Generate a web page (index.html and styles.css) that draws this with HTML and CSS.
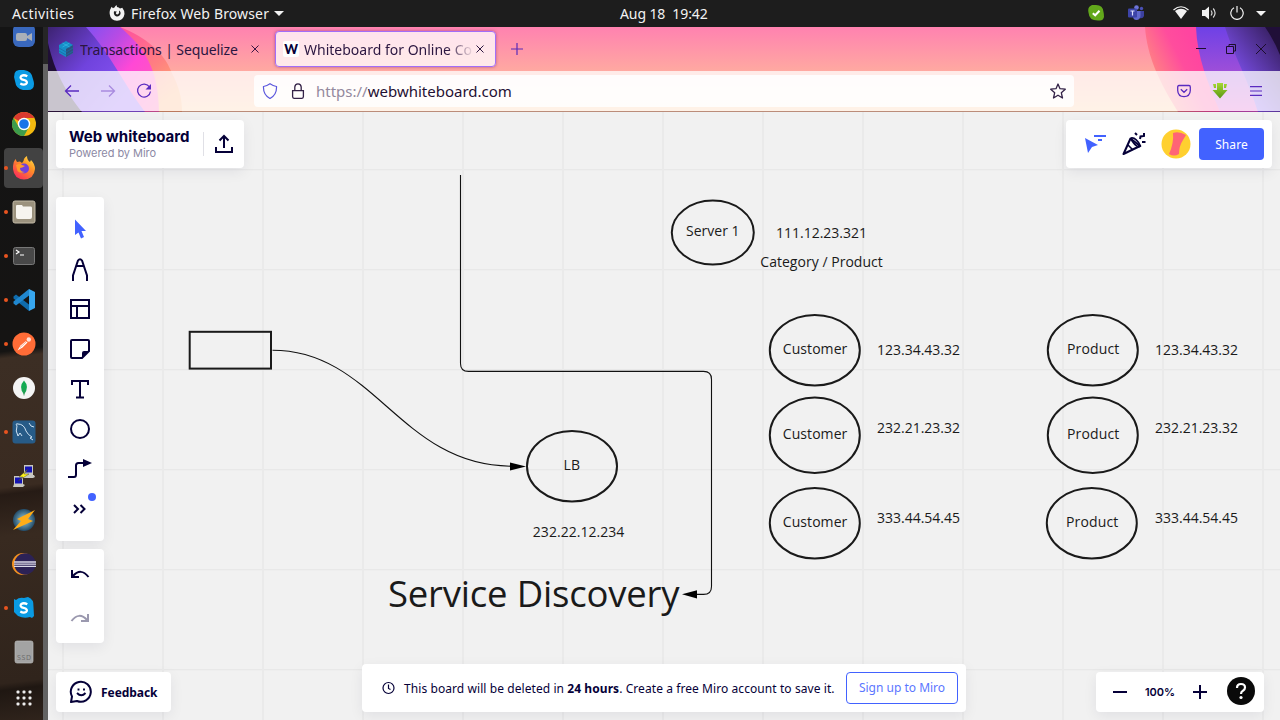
FILE: index.html
```html
<!DOCTYPE html>
<html lang="en">
<head>
<meta charset="utf-8">
<title>Web whiteboard</title>
<link rel="stylesheet" href="styles.css">
</head>
<body>
<header class="topbar">
  <span class="activities">Activities</span>
  <svg class="app-icon" width="16" height="16" viewBox="0 0 16 16"><path d="M1 5L2.600 1.800L4 3.200Q4.800 2.600 5.500 2.500Q6 1 7.500 0L8 2Q10 2.200 11 3.500L13.300 2.800Q15.800 6 15.500 9Q14.500 15.500 8 15.800Q1.500 15.500.7 9Q.4 7 1 5Z" fill="#f2f2f2"/><path d="M5 6.200L7.800 6.500L6.800 8Q7 9.800 9 9.300Q10.800 8.500 10 5.500Q12.300 7 11.300 9.500Q9.800 12 7 11.200Q4.200 9.800 5 6.200Z" fill="#1d1d1d"/></svg>
  <span class="app-name">Firefox Web Browser</span>
  <i class="caret"></i>
  <span class="clock">Aug 18&nbsp; 19:42</span>
  <div class="tray">
    <svg width="16" height="16" viewBox="0 0 16 16"><path d="M4 0H8Q15 0 15.500 7Q16 9 16 12Q15 16 11 15.500Q1 16 .6 8Q-1 2 4 0Z" fill="#62a81b"/><path d="M4.800 8.200L7.200 10.300L11.500 5.800" fill="none" stroke="#fff" stroke-width="2"/></svg>
    <svg class="teams" width="16" height="16" viewBox="0 0 16 16"><circle cx="8.500" cy="2.500" r="2.300" fill="#6d74d8"/><circle cx="13.500" cy="3.500" r="1.700" fill="#4a50b5"/><path d="M10 6H16V11Q15 14 11.500 13Z" fill="#3c41a0"/><path d="M5 6H12.500V11Q12 15 8.500 15Q5 15 5 11Z" fill="#6168cc"/><rect y="3.500" width="9" height="9" rx="1" fill="#3d44a8"/><path d="M2.500 6H6.500M4.500 6V10.500" stroke="#dfe1ff" stroke-width="1.200"/></svg>
    <svg class="wifi" width="16" height="14" viewBox="0 0 16 14"><path d="M.5 4Q8-2.500 15.500 4" fill="none" stroke="#f2f2f2" stroke-width="1.200"/><path d="M2 5Q8 .7 14 5L8 13Z" fill="#f2f2f2"/></svg>
    <svg class="sound" width="16" height="14" viewBox="0 0 16 14"><path d="M1 4H4L8 .5V13.500L4 10H1Z" fill="#f2f2f2"/><path d="M10 4.500Q12 7 10 9.500M12.200 2.500Q16 7 12.200 11.500" fill="none" stroke="#d8d8d8" stroke-width="1.200"/></svg>
    <svg class="power" width="14" height="14" viewBox="0 0 14 14"><path d="M4 1.800A6.200 6.200 0 1 0 10 1.800M7 0V6.500" fill="none" stroke="#f2f2f2" stroke-width="1.200"/></svg>
    <i class="caret"></i>
  </div>
</header>

<div class="desktop">
  <nav class="dock">
    <div class="dock-items">
      <div class="app"><svg width="24" height="24" viewBox="0 0 24 24"><rect x="1" width="22" height="23" rx="6" fill="#3968bd"/><rect x="4" y="9" width="11" height="8" rx="2" fill="#aab0b8"/><path d="M15 12L20 9V17L15 14Z" fill="#aab0b8"/></svg></div>
      <div class="app"><svg width="24" height="24" viewBox="0 0 24 24"><path d="M7 2Q10 2 12 2Q20 3 21 11Q22 14 22 16Q22 22 16 22Q13 22 11 22Q4 21 3 13Q0 3 7 2Z" fill="#0a9be4"/><path d="M15.300 8.300Q12 6.400 9.300 7.900Q7.500 10 10 11.400L13.500 12.500Q16 14 14 16Q11.500 17.400 8.300 15.500" fill="none" stroke="#fff" stroke-width="2.300"/></svg></div>
      <div class="app"><svg width="24" height="24" viewBox="0 0 24 24"><circle cx="12" cy="12" r="12" fill="#f2b90f"/><path d="M12 12L1.600 6A12 12 0 0 1 22.400 6H12Z" fill="#d93a2f"/><path d="M1.600 6A12 12 0 0 0 12 24L17 15L12 12L6.800 15Z" fill="#3c9c4c"/><circle cx="12" cy="12" r="6.200" fill="#fff"/><circle cx="12" cy="12" r="4.800" fill="#1a73e8"/></svg></div>
      <div class="app running selected"><svg width="24" height="24" viewBox="0 0 24 24"><defs><linearGradient id="fox" x1="1" y1="0" x2=".3" y2="1"><stop offset="0" stop-color="#fff04d"/><stop offset=".45" stop-color="#ff9326"/><stop offset="1" stop-color="#fa3059"/></linearGradient></defs><path d="M1 10Q1 6 3.500 3L5 6L8 5.500L10 7Q12 5 12 3Q13 1 15 0Q15 4 18 6L19 4Q23 8 23 13Q22 23 12 23.500Q2 23 1 13Z" fill="url(#fox)"/><circle cx="12" cy="12.500" r="5" fill="#7340dc"/><path d="M4 9Q8 7 10 9L13 10Q10 12 8 12Q8 16 13 16Q8 18 5.500 15Z" fill="#ff9a2a"/></svg></div>
      <div class="app running"><svg width="24" height="24" viewBox="0 0 24 24"><rect x="1" y="1" width="22" height="22" rx="2" fill="#9b927e" stroke="#c1b9a6"/><path d="M4 6Q4 5 5 5H10L11 6.500H19Q20 6.500 20 8V17Q20 19 18 19H6Q4 19 4 17Z" fill="#f6f4ef"/></svg></div>
      <div class="app running"><svg width="24" height="24" viewBox="0 0 24 24"><rect x="1.500" y="3.500" width="21" height="17" rx="2" fill="#484848" stroke="#777"/><path d="M4 6L7 8L4 10M8 11H12" fill="none" stroke="#fff" stroke-width="1.200"/></svg></div>
      <div class="app running"><svg width="24" height="24" viewBox="0 0 24 24"><path d="M1.500 8.500L4 6.500L17 16.500V23L1.500 10.500Z" fill="#0f6cad"/><path d="M1.500 15.500L4 17.500L17 7.500V1L1.500 13.500Z" fill="#2087cf"/><path d="M17 1L23 4V20L17 23Z" fill="#37a6ef"/></svg></div>
      <div class="app running"><svg width="24" height="24" viewBox="0 0 24 24"><circle cx="12" cy="12" r="11.500" fill="#ff6c37"/><path d="M5.500 18.500L8.500 13.500L14 9L15.500 10.500L10.500 15.500Z" fill="#fff"/><circle cx="16.800" cy="7.500" r="2.200" fill="#ffe3d9"/><path d="M8 15.500L15 9" stroke="#ff6c37" stroke-width=".6"/></svg></div>
      <div class="app"><svg width="24" height="24" viewBox="0 0 24 24"><circle cx="12" cy="12" r="11" fill="#f4f4f4"/><path d="M12 4.500Q18 11 12 18.500Q6 11 12 4.500Z" fill="#13aa52"/><path d="M12 12V19.500" stroke="#3c8e54" stroke-width=".8"/></svg></div>
      <div class="app running"><svg width="24" height="24" viewBox="0 0 24 24"><rect x=".5" y=".5" width="23" height="23" rx="3" fill="#275b87"/><path d="M6 16Q3 11 5 6Q3 3 6 4Q12 4 14 11Q16 15 20 17L18 18L21 20M6 16L8 13L10 16M17 3L19 6L22 7" fill="none" stroke="#cfe2f2" stroke-width="1"/></svg></div>
      <div class="app"><svg width="24" height="24" viewBox="0 0 24 24"><path d="M12 1H21V11H22L23 13L21 14H12L10 12L12 10Z" fill="#c7c7c0"/><rect x="13" y="2.500" width="7" height="6" fill="#1414b4"/><path d="M2 12H11V20L13 21L11 23H1L2 20Z" fill="#c7c7c0"/><rect x="3" y="13.500" width="7" height="6" fill="#1414b4"/><path d="M16 5L7 13H11L6 17L17 10H12Z" fill="#fff31a" stroke="#333" stroke-width=".4"/></svg></div>
      <div class="app"><svg width="24" height="24" viewBox="0 0 24 24"><defs><radialGradient id="globe"><stop offset="0" stop-color="#9cd0df"/><stop offset="1" stop-color="#224b68"/></radialGradient></defs><circle cx="12" cy="12" r="11" fill="url(#globe)"/><path d="M23 2L5 11L9 13L1 22L21 13L16 11Z" fill="#ffad18"/></svg></div>
      <div class="app"><svg width="24" height="24" viewBox="0 0 24 24"><circle cx="11" cy="12" r="11" fill="#f39221"/><circle cx="13" cy="12" r="10.700" fill="#2c2255"/><path d="M2 10H24M2 12.200H24M2 14.400H24" stroke="#d9d8e6" stroke-width="1.300"/></svg></div>
      <div class="app running"><svg width="24" height="24" viewBox="0 0 24 24"><path d="M2 3L4 4Q7 1 12 2L16 1Q22 3 21.500 11L22 20L20 22L18 21Q12 23 6 20L2 16Z" fill="#0a9be4"/><path d="M15.300 8.300Q12 6.400 9.300 7.900Q7.500 10 10 11.400L13.500 12.500Q16 14 14 16Q11.500 17.400 8.300 15.500" fill="none" stroke="#fff" stroke-width="2.300"/></svg></div>
      <div class="app"><svg width="24" height="24" viewBox="0 0 24 24"><rect x="3" y="1" width="18" height="22" rx="2" fill="#a3a3a3" stroke="#bababa" stroke-width=".7"/><text x="5" y="20" font-family="Open Sans, sans-serif" font-size="7" textLength="14" fill="#6a6a6a">SSD</text></svg></div>
      <div class="app"><svg width="24" height="24" viewBox="0 0 24 24" fill="#eee"><rect x="4.500" y="6.500" width="3" height="3" rx="1"/><rect x="10.500" y="6.500" width="3" height="3" rx="1"/><rect x="16.500" y="6.500" width="3" height="3" rx="1"/><rect x="4.500" y="12.500" width="3" height="3" rx="1"/><rect x="10.500" y="12.500" width="3" height="3" rx="1"/><rect x="16.500" y="12.500" width="3" height="3" rx="1"/><rect x="4.500" y="18.500" width="3" height="3" rx="1"/><rect x="10.500" y="18.500" width="3" height="3" rx="1"/><rect x="16.500" y="18.500" width="3" height="3" rx="1"/></svg></div>
    </div>
    <div class="dock-edge"></div>
  </nav>

  <div class="browser">
    <div class="chrome">
      <svg class="theme" width="1232" height="85" viewBox="0 0 1232 85">
        <defs>
          <linearGradient id="base" x1="0" y1="0" x2="0" y2="1"><stop offset="0" stop-color="#ff82b0"/><stop offset=".52" stop-color="#ffa9a1"/><stop offset="1" stop-color="#ffcb9b"/></linearGradient>
          <linearGradient id="purpleL" gradientUnits="userSpaceOnUse" x1="0" y1="0" x2="80" y2="70"><stop offset="0" stop-color="#3d2372"/><stop offset=".5" stop-color="#7043dd"/><stop offset="1" stop-color="#8b56f6"/></linearGradient>
          <linearGradient id="magenta" gradientUnits="userSpaceOnUse" x1="38" y1="0" x2="120" y2="70"><stop offset="0" stop-color="#8150f2"/><stop offset=".28" stop-color="#b84be4"/><stop offset=".55" stop-color="#ff48d6"/><stop offset="1" stop-color="#ff62b0"/></linearGradient>
          <linearGradient id="warmL" gradientUnits="userSpaceOnUse" x1="72" y1="0" x2="125" y2="70"><stop offset="0" stop-color="#ff4d9f"/><stop offset=".6" stop-color="#ff8180"/><stop offset="1" stop-color="#ffad70"/></linearGradient>
          <linearGradient id="warmR" gradientUnits="userSpaceOnUse" x1="1102" y1="50" x2="1150" y2="25"><stop offset="0" stop-color="#ff8c7e"/><stop offset=".65" stop-color="#ff4d9d"/><stop offset="1" stop-color="#ff45a0"/></linearGradient>
          <linearGradient id="purpleR" x1="0" y1="0" x2="0" y2="1"><stop offset="0" stop-color="#6e41e6"/><stop offset=".55" stop-color="#a04fd8"/><stop offset="1" stop-color="#dd50c9"/></linearGradient>
          <linearGradient id="violetR" x1="1" y1="0" x2=".3" y2=".8"><stop offset=".15" stop-color="#3b2269"/><stop offset="1" stop-color="#8455fa"/></linearGradient>
        </defs>
        <rect width="1232" height="85" fill="url(#base)"/>
        <path d="M72 0C98 10 116 26 123 44C131 60 134 70 134 85H0V0Z" fill="url(#warmL)"/>
        <path d="M72 0C98 22 110 42 111 85H0V0Z" fill="url(#magenta)"/>
        <path d="M38 0C62 26 75 56 97 85H0V0Z" fill="url(#purpleL)"/>
        <path d="M0 16C7 46 18 65 34 85H0Z" fill="#1f0f35"/>
        <path d="M1097 0C1099 30 1112 56 1130 85H1232V0Z" fill="url(#warmR)"/>
        <path d="M1148 0C1149 30 1160 56 1172 85H1232V0Z" fill="url(#purpleR)"/>
        <path d="M1177 0C1184 24 1199 50 1210 85H1232V0Z" fill="url(#violetR)"/>
        <path d="M1217 0Q1226 13 1232 28V0Z" fill="#200f38"/>
      </svg>
      <div class="tabs">
        <div class="tab">
          <svg width="16" height="16" viewBox="0 0 16 16"><path d="M8 0L15 4V12L8 16L1 12V4Z" fill="#168fc8"/><path d="M8 8L15 4V12L8 16Z" fill="#2b537f"/><path d="M1 7L8 11L15 7M1 10L8 14L15 10" fill="none" stroke="#1c6aa5" stroke-width=".8"/><path d="M4.500 2L11.500 6M11.500 2L4.500 6" stroke="#3cbde8" stroke-width=".6"/></svg>
          <span class="tab-title first">Transactions | Sequelize</span>
          <svg class="close" width="8" height="8" viewBox="0 0 8 8"><path d="M.5.5L7.500 7.500M7.500.5L.5 7.500" stroke="#3a1644"/></svg>
        </div>
        <div class="tab active">
          <span class="w-icon">W</span>
          <span class="tab-title second">Whiteboard for Online Co</span>
          <svg class="close" width="8" height="8" viewBox="0 0 8 8"><path d="M.5.5L7.500 7.500M7.500.5L.5 7.500" stroke="#2b1640"/></svg>
        </div>
        <svg class="new-tab" width="12" height="12" viewBox="0 0 12 12"><path d="M6 0V12M0 6H12" stroke="#5a2bb8" stroke-width="1.200"/></svg>
        <div class="window-buttons">
          <svg width="10" height="10" viewBox="0 0 10 10"><path d="M0 4.500H10" stroke="#1c0e2d"/></svg>
          <svg width="10" height="10" viewBox="0 0 10 10"><path d="M.5 2.500H7.500V9.500H.5ZM3 2.500V.5H9.500V7H7.500" fill="none" stroke="#1c0e2d"/></svg>
          <svg width="10" height="10" viewBox="0 0 10 10"><path d="M0 0L10 10M10 0L0 10" stroke="#1c0e2d"/></svg>
        </div>
      </div>
      <div class="toolbar">
        <svg width="16" height="16" viewBox="0 0 16 16"><path d="M15 8H1.500M7 2.500L1.500 8L7 13.500" fill="none" stroke="#5a2bc0" stroke-width="1.300"/></svg>
        <svg class="forward" width="16" height="16" viewBox="0 0 16 16"><path d="M1 8H14.500M9 2.500L14.500 8L9 13.500" fill="none" stroke="#a98bdf" stroke-width="1.300"/></svg>
        <svg class="reload" width="16" height="16" viewBox="0 0 16 16"><path d="M13.500 4A6.500 6.500 0 1 0 14.500 8.500" fill="none" stroke="#5a2bc0" stroke-width="1.300"/><path d="M15 1V6.500H9.500Z" fill="#5a2bc0"/></svg>
        <div class="address">
          <svg width="16" height="16" viewBox="0 0 16 16"><path d="M8 .8Q11 3 14.500 3.500Q15 12 8 15.500Q1 12 1.500 3.500Q5 3 8 .8Z" fill="none" stroke="#5b57dd" stroke-width="1.200"/></svg>
          <svg class="lock" width="14" height="16" viewBox="0 0 14 16"><path d="M1.600 7.600H12.400V13.500Q12.400 15.300 11 15.300H3Q1.600 15.300 1.600 13.500ZM3.800 7V4Q4 .8 7 .8Q10 .8 10.200 4V7" fill="none" stroke="#342247" stroke-width="1.300"/></svg>
          <span class="url"><span class="scheme">https://</span>webwhiteboard.com</span>
          <svg class="star" width="16" height="16" viewBox="0 0 16 16"><path d="M8 1L10 5.700L15.300 6.200L11.300 9.700L12.500 15L8 12.200L3.500 15L4.700 9.700L.7 6.200L6 5.700Z" fill="none" stroke="#342247" stroke-width="1.300" stroke-linejoin="round"/></svg>
        </div>
        <svg class="pocket" width="14" height="14" viewBox="0 0 14 14"><path d="M2 1.500H12Q13.300 1.500 13.300 3V6.500Q13 12.500 7 12.700Q1 12.500.7 6.500V3Q.7 1.500 2 1.500ZM3.800 5.300L7 8.300L10.200 5.300" fill="none" stroke="#5a2bc0" stroke-width="1.300"/></svg>
        <svg class="download" width="16" height="16" viewBox="0 0 16 16"><defs><linearGradient id="leaf" x1="0" y1="0" x2="0" y2="1"><stop offset="0" stop-color="#a5d832"/><stop offset="1" stop-color="#5a9714"/></linearGradient></defs><path d="M5 0H11V7H15.500L8 15.500L.5 7H5ZM1 1H4V5H2ZM12 1H15L14 5H12Z" fill="url(#leaf)"/></svg>
        <svg class="menu" width="12" height="10" viewBox="0 0 12 10"><path d="M0 .7H12M0 5H12M0 9.300H12" stroke="#5a2bc0" stroke-width="1.200"/></svg>
      </div>
    </div>

    <main class="board">
      <svg class="canvas" width="1232" height="608" viewBox="48 112 1232 608">
        <g fill="none" stroke="#1a1a1a" stroke-width="2">
          <rect x="189.700" y="331.800" width="81.300" height="36.800"/>
          <ellipse cx="712.800" cy="232.600" rx="41" ry="32"/>
          <ellipse cx="572" cy="466.200" rx="45" ry="35.300"/>
          <ellipse cx="814.800" cy="350.200" rx="45" ry="35.300"/>
          <ellipse cx="814.800" cy="435.300" rx="45" ry="37.800"/>
          <ellipse cx="814.800" cy="523.200" rx="45" ry="35.300"/>
          <ellipse cx="1092.800" cy="350.200" rx="45" ry="35.300"/>
          <ellipse cx="1092.800" cy="435.300" rx="45" ry="37.800"/>
          <ellipse cx="1091.800" cy="523.200" rx="45" ry="35.300"/>
        </g>
        <g fill="none" stroke="#111" stroke-width="1.100">
          <path d="M272.500 350.200C375 350.200 400 466.200 512 466.200"/>
          <path d="M460.500 175V363.400Q460.500 371.400 468.500 371.400H703.500Q711.500 371.400 711.500 379.400V586.400Q711.500 594.400 703.500 594.400H694"/>
        </g>
        <path d="M526 466.400L510 462.400V470.400ZM682 594.300L697 590.200V598.400Z" fill="#000"/>
        <g class="label">
          <text x="686" y="236" textLength="53.500">Server 1</text>
          <text x="776" y="238" textLength="91">111.12.23.321</text>
          <text x="760.300" y="267" textLength="122.500">Category / Product</text>
          <text x="563.500" y="470" textLength="16.500">LB</text>
          <text x="532.800" y="537" textLength="91.500">232.22.12.234</text>
          <text x="782.800" y="354" textLength="64.500">Customer</text>
          <text x="782.800" y="439" textLength="64.500">Customer</text>
          <text x="782.800" y="527" textLength="64.500">Customer</text>
          <text x="1067" y="354" textLength="52.300">Product</text>
          <text x="1067" y="439" textLength="52.300">Product</text>
          <text x="1066" y="527" textLength="52.300">Product</text>
          <text x="877" y="355" textLength="83">123.34.43.32</text>
          <text x="877" y="433" textLength="83">232.21.23.32</text>
          <text x="877" y="523" textLength="83">333.44.54.45</text>
          <text x="1155" y="355" textLength="83">123.34.43.32</text>
          <text x="1155" y="433" textLength="83">232.21.23.32</text>
          <text x="1155" y="523" textLength="83">333.44.54.45</text>
          <text class="big" x="388" y="607" textLength="291.500">Service Discovery</text>
        </g>
      </svg>

      <section class="panel brand">
        <div class="brand-text">
          <strong>Web whiteboard</strong>
          <span>Powered by Miro</span>
        </div>
        <i class="divider"></i>
        <svg width="18" height="20" viewBox="0 0 18 20"><path d="M1 13V18H17V13M9 14V3M4.500 6.500L9 2L13.500 6.500" fill="none" stroke="#050038" stroke-width="2"/></svg>
      </section>

      <section class="panel share-bar">
        <svg width="22" height="20" viewBox="0 0 22 20"><path d="M1 4L14 11L8 13L4 19Z" fill="#4262ff"/><path d="M10 2H22M14 6H18" stroke="#4262ff" stroke-width="1.800"/></svg>
        <svg class="party" width="24" height="24" viewBox="0 0 24 24"><path d="M1.500 22L8.500 6.500L18 14Z" fill="none" stroke="#050038" stroke-width="2" stroke-linejoin="round"/><path d="M9 6Q14 5 18.500 14Q15 17 8.500 6.500M6 13L11 18" fill="none" stroke="#050038" stroke-width="1.600"/><path d="M18 7L18.500 4.500L22 4V1M13 1L15 3M20 10H23.500" fill="none" stroke="#050038" stroke-width="2"/></svg>
        <svg class="avatar" width="30" height="30" viewBox="0 0 30 30"><circle cx="15" cy="15" r="14.500" fill="#ffd02f"/><path d="M12 4Q18 2 25 6L22 11Q18 17 18 25Q13 28 8 25Q13 14 12 4Z" fill="#ff6575"/></svg>
        <button class="share">Share</button>
      </section>

      <section class="panel tools">
        <svg viewBox="0 0 24 24"><path d="M7 2.500L18 14H13.500L16 20L13 21.500L10.500 15.500L7 18Z" fill="#4262ff"/></svg>
        <svg viewBox="0 0 24 24"><path d="M5 24V18.500L10 3.500Q12 .8 14 3.500L19 18.500V24M8 9H16" fill="none" stroke="#050038" stroke-width="2"/></svg>
        <svg viewBox="0 0 24 24"><path d="M3 3H21V21H3ZM3 9H21M9 9V21" fill="none" stroke="#050038" stroke-width="2"/></svg>
        <svg viewBox="0 0 24 24"><path d="M3 4Q3 3 4 3H20Q21 3 21 4V14L14 21H4Q3 21 3 20Z" fill="none" stroke="#050038" stroke-width="2"/><path d="M14 21V16Q14 14 16 14H21Z" fill="#050038"/></svg>
        <svg viewBox="0 0 24 24"><path d="M4 8V4H20V8M12 4V20M8 20.500H16" fill="none" stroke="#050038" stroke-width="2"/></svg>
        <svg viewBox="0 0 24 24"><circle cx="12" cy="12" r="9" fill="none" stroke="#050038" stroke-width="2"/></svg>
        <svg viewBox="0 0 24 24"><path d="M0 20H6Q8 20 8 17.500V8.500Q8 6 10.500 6H16" fill="none" stroke="#050038" stroke-width="2"/><path d="M15 2L24 6L15 10Z" fill="#050038"/></svg>
        <div class="more"><svg viewBox="0 0 24 24"><path d="M6 8L10 12L6 16M12.500 8L16.500 12L12.500 16" fill="none" stroke="#050038" stroke-width="2"/></svg><i class="dot"></i></div>
      </section>

      <section class="panel history">
        <svg viewBox="0 0 24 24"><path d="M4 8V15H11M4.500 14.500Q13 5 20.500 15" fill="none" stroke="#050038" stroke-width="2"/></svg>
        <svg viewBox="0 0 24 24"><path d="M20 8V15H13M19.500 14.500Q11 5 3.500 15" fill="none" stroke="#9b99af" stroke-width="2"/></svg>
      </section>

      <section class="panel feedback">
        <svg width="24" height="24" viewBox="0 0 24 24"><path d="M2 22L3 16.500A10 10 0 1 1 8 21Z" fill="none" stroke="#050038" stroke-width="2" stroke-linejoin="round"/><path d="M9.500 8.500V10.500M15 8.500V10.500M8 13Q12.300 17.500 16.500 13" fill="none" stroke="#050038" stroke-width="1.900"/></svg>
        <strong>Feedback</strong>
      </section>

      <section class="panel notice">
        <svg width="14" height="14" viewBox="0 0 14 14"><circle cx="6.500" cy="7" r="5.500" fill="none" stroke="#050038" stroke-width="1.200"/><path d="M6.500 3.500V7.500L8.500 8.500" fill="none" stroke="#050038" stroke-width="1.200"/></svg>
        <span class="notice-text">This board will be deleted in <b>24 hours</b>. Create a free Miro account to save it.</span>
        <button class="signup">Sign up to Miro</button>
      </section>

      <section class="panel zoom">
        <svg width="14" height="14" viewBox="0 0 14 14"><path d="M0 7H14" stroke="#050038" stroke-width="2"/></svg>
        <span class="percent">100%</span>
        <svg width="14" height="14" viewBox="0 0 14 14"><path d="M0 7H14M7 0V14" stroke="#050038" stroke-width="2"/></svg>
        <svg class="help" width="28" height="28" viewBox="0 0 28 28"><circle cx="14" cy="14" r="14" fill="#0a0a0a"/><path d="M10 11Q10 7 14 7Q18 7 18 10.500Q18 12.500 16 13.700Q14 15 14 17" fill="none" stroke="#fff" stroke-width="2.200"/><circle cx="14" cy="20.500" r="1.600" fill="#fff"/></svg>
      </section>
    </main>
  </div>
</div>
</body>
</html>
```

FILE: styles.css
```css
* { box-sizing: border-box; }
body { margin: 0; width: 1280px; height: 720px; overflow: hidden; font-family: "Noto Sans", "Open Sans", sans-serif; color: #050038; }
svg { display: block; flex: none; }
button { margin: 0; padding: 0; font: inherit; }

.topbar { display: flex; align-items: center; height: 27px; padding: 0 0 1px 12px; background: #1d1d1d; color: #f2f2f2; font-size: 14px; white-space: nowrap; }
.activities { width: 97px; letter-spacing: .4px; }
.app-icon { margin-right: 6px; }
.app-name { width: 143px; letter-spacing: .14px; }
.caret { width: 0; border: 5px solid transparent; border-top-color: #f2f2f2; border-bottom: 0; }
.clock { margin-left: 336px; letter-spacing: -.1px; }
.tray { display: flex; align-items: center; margin-left: auto; padding-right: 14px; }
.teams { margin-left: 24px; }
.wifi { margin-left: 29px; }
.sound { margin-left: 12px; }
.power { margin: 0 12px 0 13px; }

.desktop { display: flex; height: 693px; }
.dock { display: flex; width: 48px; overflow: hidden; background: linear-gradient(173deg, #141414 0, #151413 46.500%, #3c2e24 47.500%, #3a2b21 66%, #261b15 67%, #382a20 73%, #30241c 94%, #1f1712 95%, #30241c 100%); }
.dock-items { width: 43px; margin-top: -13px; }
.app { display: flex; align-items: center; height: 44px; padding-left: 12px; }
.app.running { padding-left: 4px; gap: 4px; }
.app.running::before { content: ""; width: 4px; height: 4px; border-radius: 50%; background: #e95420; }
.app.selected { height: 40px; margin: 2px 0 2px 4px; padding-left: 0; background: #424242; border-radius: 4px; }
.dock-edge { width: 5px; background: linear-gradient(#262626 0 37px, #636363 37px); }

.browser { width: 1232px; }
.chrome { display: grid; height: 85px; grid-template-rows: 44px 41px; grid-template-columns: 1232px; }
.theme { grid-area: 1 / 1 / 3 / 2; filter: none; }
.tabs { grid-area: 1 / 1; z-index: 1; display: flex; align-items: center; }
.toolbar { grid-area: 2 / 1; z-index: 1; display: flex; align-items: center; height: 41px; padding-left: 16px; border-bottom: 1px solid rgba(60, 25, 60, .35); background: rgba(255, 255, 255, .76); background-clip: padding-box; }
.tab { display: flex; align-items: center; width: 227px; height: 36px; padding-left: 10px; color: #2b1640; font-size: 14px; white-space: nowrap; }
.tab-title { width: 170px; overflow: hidden; }
.tab-title.first { margin-left: 6px; letter-spacing: -.1px; }
.tab.active { width: 221px; padding-left: 7px; border: 1px solid #a36ef8; border-radius: 4px; background: rgba(255, 255, 255, .77); box-shadow: 0 0 3px rgba(90, 20, 100, .5); }
.tab-title.second { margin-left: 5px; -webkit-mask-image: linear-gradient(90deg, #000 84%, transparent); mask-image: linear-gradient(90deg, #000 84%, transparent); }
.w-icon { width: 16px; height: 16px; background: #fff; border-radius: 2px; font: 900 13px/16px Lato, sans-serif; text-align: center; color: #050038; }
.tab .close { margin-left: 1px; }
.tab.active .close { margin-left: 2px; }
.new-tab { margin-left: 15px; }
.window-buttons { display: flex; gap: 20px; margin-left: auto; padding-right: 14px; }
.forward { margin-left: 20px; }
.reload { margin-left: 20px; }
.address { display: flex; align-items: center; width: 820px; height: 32px; margin-left: 102px; padding: 0 8px; border-radius: 4px; background: rgba(255, 255, 255, .84); color: #1f1033; font-size: 15px; }
.lock { margin: 0 11px 0 13px; }
.url { letter-spacing: 0; }
.scheme { color: #94899e; }
.star { margin-left: auto; }
.pocket { margin-left: 103px; }
.download { margin-left: 21px; }
.menu { margin-left: 22px; }

.board { position: relative; height: 608px; background-color: #f1f1f1; background-image: linear-gradient(90deg, #eaeaea 2px, transparent 2px), linear-gradient(#e8e8e8 1px, #eeeeee 1px 2px, transparent 2px); background-size: 100px 100px; background-position: 14px 57px; }
.canvas { font-family: "Open Sans", "Noto Sans", sans-serif; }
.label { font-size: 14px; fill: #1a1a1a; }
.big { font-size: 36.500px; }

.panel { position: absolute; display: flex; align-items: center; background: #fff; border-radius: 4px; box-shadow: 0 4px 14px rgba(5, 0, 56, .07); white-space: nowrap; }
.brand { left: 8px; top: 8px; width: 188px; height: 48px; padding-left: 13px; }
.brand-text { display: flex; flex-direction: column; width: 134px; font-family: Inter, sans-serif; }
.brand-text strong { font-size: 15px; line-height: 18px; letter-spacing: .05px; }
.brand-text span { color: #8c89a4; font-size: 11px; line-height: 14px; letter-spacing: -.05px; }
.divider { width: 1px; height: 24px; margin-right: 11px; background: #e0e0e6; }
.share-bar { right: 8px; top: 8px; width: 206px; height: 48px; padding-left: 18px; }
.party { margin-left: 16px; }
.avatar { margin: 0 8px 0 15px; }
.share { width: 65px; height: 32px; border: 0; border-radius: 4px; background: #4262ff; color: #fff; font-size: 12px; letter-spacing: .1px; }
.tools, .history { left: 8px; width: 48px; flex-direction: column; gap: 16px; }
.tools { top: 85px; height: 344px; padding-top: 20px; }
.tools svg, .history svg { width: 24px; height: 24px; }
.more { position: relative; }
.dot { position: absolute; right: -4px; top: -4px; width: 8px; height: 8px; border-radius: 50%; background: #4262ff; }
.history { top: 437px; height: 94px; padding-top: 13px; gap: 20px; }
.feedback { left: 8px; top: 560px; width: 115px; height: 40px; padding-left: 13px; gap: 8px; font-size: 12px; letter-spacing: -.05px; }
.notice { left: 314px; top: 552px; width: 604px; height: 48px; padding-left: 20px; font-size: 12px; }
.notice-text { width: 442px; margin-left: 8px; letter-spacing: .075px; }
.signup { width: 112px; height: 32px; padding-bottom: 2px; border: 1px solid #4262ff; border-radius: 4px; background: #fff; color: #5b76ff; }
.zoom { right: 16px; top: 560px; width: 168px; height: 40px; padding-left: 17px; }
.percent { width: 34px; margin: 0 16px; font: 600 11px Inter, sans-serif; text-align: center; }
.help { margin: -2px 0 0 20px; }
```
